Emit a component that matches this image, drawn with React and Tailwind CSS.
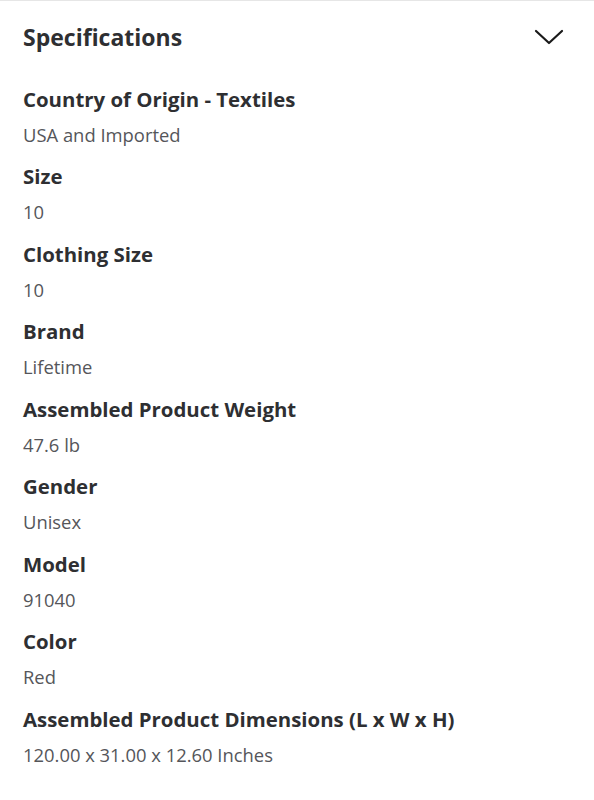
import React from 'react';

const specs = [
  { label: 'Country of Origin - Textiles', value: 'USA and Imported' },
  { label: 'Size', value: '10' },
  { label: 'Clothing Size', value: '10' },
  { label: 'Brand', value: 'Lifetime' },
  { label: 'Assembled Product Weight', value: '47.6 lb' },
  { label: 'Gender', value: 'Unisex' },
  { label: 'Model', value: '91040' },
  { label: 'Color', value: 'Red' },
  { label: 'Assembled Product Dimensions (L x W x H)', value: '120.00 x 31.00 x 12.60 Inches' },
];

const App = () => {
  return (
    <div className="w-[594px] h-[800px] bg-white border-t border-[#e6e6e6] font-['Open_Sans',sans-serif] overflow-hidden">
      <div className="h-[72px] flex items-center justify-between pl-[23px] pr-[30px]">
        <h2 className="text-[23px] font-bold text-[#2e2f32] leading-none">Specifications</h2>
        <svg width="30" height="18" viewBox="0 0 30 18" fill="none">
          <path d="M2 3 L15 15 L28 3" stroke="#1a1a1a" strokeWidth="2.2" strokeLinecap="round" strokeLinejoin="round" />
        </svg>
      </div>
      <div className="flex flex-col gap-[13.5px] pl-[23px] pt-[11.5px]">
        {specs.map((s, i) => (
          <div key={i}>
            <p className="text-[20.4px] leading-[28px] font-bold text-[#2e2f32]">{s.label}</p>
            <p className="mt-[8px] text-[18.4px] leading-[28px] text-[#55565a]">{s.value}</p>
          </div>
        ))}
      </div>
    </div>
  );
};

export default App;
